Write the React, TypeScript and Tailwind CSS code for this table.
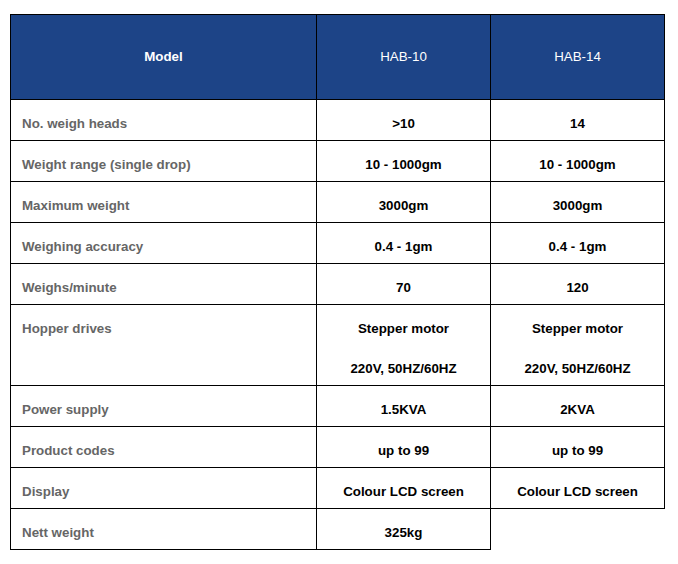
const rows: { label: string; a: string[]; b?: string[] }[] = [
  { label: "No. weigh heads", a: [">10"], b: ["14"] },
  { label: "Weight range (single drop)", a: ["10 - 1000gm"], b: ["10 - 1000gm"] },
  { label: "Maximum weight", a: ["3000gm"], b: ["3000gm"] },
  { label: "Weighing accuracy", a: ["0.4 - 1gm"], b: ["0.4 - 1gm"] },
  { label: "Weighs/minute", a: ["70"], b: ["120"] },
  {
    label: "Hopper drives",
    a: ["Stepper motor", "220V, 50HZ/60HZ"],
    b: ["Stepper motor", "220V, 50HZ/60HZ"],
  },
  { label: "Power supply", a: ["1.5KVA"], b: ["2KVA"] },
  { label: "Product codes", a: ["up to 99"], b: ["up to 99"] },
  { label: "Display", a: ["Colour LCD screen"], b: ["Colour LCD screen"] },
  { label: "Nett weight", a: ["325kg"] },
];

function Lines({ lines }: { lines: string[] }) {
  return (
    <div className="flex flex-col gap-[24px]">
      {lines.map((l, i) => (
        <div key={i} className="h-[16px] leading-[16px]">
          {l}
        </div>
      ))}
    </div>
  );
}

export default function App() {
  return (
    <div className="bg-white w-[678px] h-[564px] pt-[14px] pl-[10px] font-['Liberation_Sans',Arial,sans-serif] text-[13.33px]">
      <table className="border-collapse table-fixed w-[654px]">
        <colgroup>
          <col className="w-[306px]" />
          <col className="w-[174px]" />
          <col className="w-[174px]" />
        </colgroup>
        <thead>
          <tr className="h-[85px] bg-[#1d4487] text-white">
            <th className="border border-black font-bold text-center align-middle">Model</th>
            <th className="border border-black font-normal text-center align-middle">HAB-10</th>
            <th className="border border-black font-normal text-center align-middle">HAB-14</th>
          </tr>
        </thead>
        <tbody>
          {rows.map((r) => (
            <tr key={r.label}>
              <td className="border border-black align-top pt-[16px] pb-[8px] pl-[11px] font-bold text-[#666666]">
                <Lines lines={[r.label]} />
              </td>
              <td className="border border-black align-top pt-[16px] pb-[8px] text-center font-bold text-black">
                <Lines lines={r.a} />
              </td>
              {r.b && (
                <td className="border border-black align-top pt-[16px] pb-[8px] text-center font-bold text-black">
                  <Lines lines={r.b} />
                </td>
              )}
            </tr>
          ))}
        </tbody>
      </table>
    </div>
  );
}
